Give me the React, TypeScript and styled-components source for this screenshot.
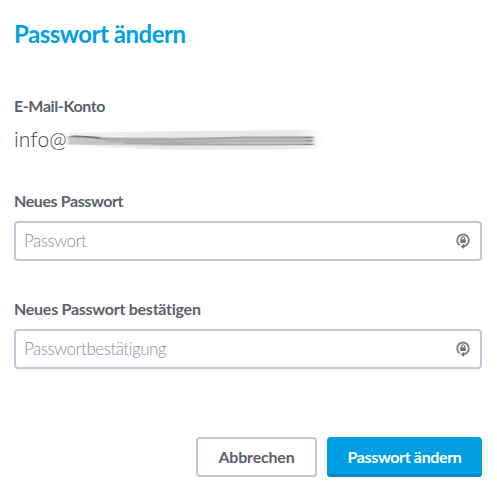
import React from "react";
import styled, { createGlobalStyle } from "styled-components";

const GlobalStyle = createGlobalStyle`
  *, *::before, *::after { box-sizing: border-box; }
  body {
    margin: 0;
    background: #fff;
    color: #5c5f6d;
    font-family: Lato, "Open Sans", sans-serif;
    font-variant-ligatures: none;
  }
`;

const Form = styled.form`
  display: flex;
  flex-direction: column;
  height: 492px;
  padding: 19px 15px 15px 14px;
`;

const Title = styled.h1`
  margin: 0 0 45px;
  color: #009fe3;
  font-size: 24px;
  font-weight: 700;
  line-height: 30px;
  letter-spacing: -0.5px;
  white-space: nowrap;
`;

const Group = styled.div<{ $gap: number }>`
  display: flex;
  flex-direction: column;
  margin-bottom: ${(p) => p.$gap}px;
`;

const Label = styled.label<{ $spacing?: number }>`
  height: 24px;
  font-size: 16px;
  font-weight: 700;
  line-height: 24px;
  letter-spacing: ${(p) => p.$spacing ?? -0.4}px;
  white-space: nowrap;
`;

const Account = styled.div`
  display: flex;
  align-items: center;
  height: 40px;
  margin-top: 1px;
  font-size: 21px;
  line-height: 40px;
`;

const AccountText = styled.span`
  width: 51px;
  flex: none;
  color: #3c3d46;
  font-weight: 300;
  letter-spacing: 0.2px;
`;

const Smudge = styled.svg`
  flex: none;
  margin-top: 3px;
`;

const Field = styled.div`
  display: flex;
  align-items: center;
  height: 40px;
  margin-top: 8px;
  padding: 0 9px 0 8px;
  border: 2px solid #c3c6da;
  border-radius: 4px;
  background: #fff;
`;

const Input = styled.input`
  flex: 1;
  min-width: 0;
  height: 36px;
  padding: 0 0 2px;
  border: 0;
  outline: 0;
  background: transparent;
  color: #5c5f6d;
  font: 300 17px Lato, sans-serif;
  font-variant-ligatures: none;
  letter-spacing: -0.5px;
  &::placeholder { color: #888fae; opacity: 1; }
`;

const Actions = styled.div`
  display: flex;
  justify-content: flex-end;
  gap: 10px;
  margin-top: auto;
`;

const Button = styled.button<{ $primary?: boolean }>`
  width: ${(p) => (p.$primary ? 155 : 121)}px;
  height: 40px;
  padding: 0 0 1px;
  border: ${(p) => (p.$primary ? "0" : "2px solid #c3c6da")};
  border-radius: 4px;
  background: ${(p) => (p.$primary ? "#009fe3" : "#fff")};
  box-shadow: ${(p) => (p.$primary ? "inset 0 -3px #0d85cb" : "none")};
  color: ${(p) => (p.$primary ? "#fff" : "#5c5f6d")};
  font: 700 16px Lato, sans-serif;
  letter-spacing: ${(p) => (p.$primary ? -0.35 : -0.2)}px;
  white-space: nowrap;
`;

const LockIcon = () => (
  <svg width="16" height="18" viewBox="0 0 16 18" fill="none">
    <path d="M4.6 13.3A5.8 6 0 1 1 11.4 13.3L8 14.4" stroke="#858585" strokeWidth="2" />
    <path d="M9.2 11.8L5.6 14.4L9.2 17Z" fill="#777" />
    <path d="M6.4 7.5V6.4a1.6 1.6 0 0 1 3.2 0V7.5" stroke="#808080" strokeWidth="1.2" />
    <rect x="5.2" y="7.2" width="5.6" height="3.8" rx=".4" fill="#757575" />
  </svg>
);

const SmudgeMark = () => (
  <Smudge width="270" height="28" viewBox="0 0 270 28">
    <defs>
      <filter id="soft" x="-10" y="-5" width="290" height="40" filterUnits="userSpaceOnUse">
        <feGaussianBlur stdDeviation="2 .6" />
      </filter>
      <filter id="fine" x="-10" y="-5" width="290" height="40" filterUnits="userSpaceOnUse">
        <feGaussianBlur stdDeviation="1.6 .6" />
      </filter>
      <linearGradient id="edge">
        <stop offset="0" stopColor="#f2f2f2" />
        <stop offset=".4" stopColor="#e8e8e8" />
        <stop offset=".88" stopColor="#e8e8e8" />
        <stop offset="1" stopColor="#ffffff" />
      </linearGradient>
    </defs>
    <g filter="url(#soft)">
      <path d="M2 6Q60 5 120 4L250 3Q263 7 260 18L244 22L110 23L30 20L2 18Z" fill="url(#edge)" />
      <path d="M3 9L45 10L110 10.5L247 9L248 18L110 19L45 18L3 17.5Z" fill="#c6c6c8" />
    </g>
    <g fill="none" filter="url(#fine)">
      <path d="M4 10Q16 9 30 11T70 12.5L110 12.7L180 10.5H248" stroke="#a5a5a8" strokeWidth="1.8" />
      <path d="M7 9.3Q18 9 35 11" stroke="#737378" strokeWidth="1.5" />
      <path d="M40 14Q100 16 160 14L247 13.5" stroke="#b2b2b5" strokeWidth="2.4" />
      <path d="M60 16L105 17L180 17.5H248" stroke="#a5a5a8" strokeWidth="1.7" />
      <path d="M239 10.5H248M241 14H248M239 17.5H248" stroke="#858588" />
    </g>
  </Smudge>
);

export default function App() {
  return (
    <>
      <GlobalStyle />
      <Form onSubmit={(e) => e.preventDefault()}>
        <Title>Passwort ändern</Title>
        <Group $gap={30}>
          <Label as="span">E-Mail-Konto</Label>
          <Account>
            <AccountText>info@</AccountText>
            <SmudgeMark />
          </Account>
        </Group>
        <Group $gap={36}>
          <Label htmlFor="password">Neues Passwort</Label>
          <Field>
            <Input id="password" type="password" placeholder="Passwort" />
            <LockIcon />
          </Field>
        </Group>
        <Group $gap={0}>
          <Label htmlFor="confirm" $spacing={-0.26}>Neues Passwort bestätigen</Label>
          <Field>
            <Input id="confirm" type="password" placeholder="Passwortbestätigung" />
            <LockIcon />
          </Field>
        </Group>
        <Actions>
          <Button type="button">Abbrechen</Button>
          <Button type="submit" $primary>Passwort ändern</Button>
        </Actions>
      </Form>
    </>
  );
}
